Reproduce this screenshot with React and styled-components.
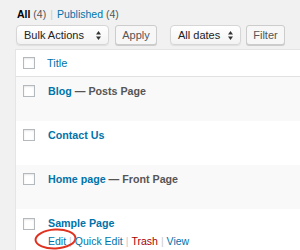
import React from "react"
import styled, { createGlobalStyle } from "styled-components"

const GlobalStyle = createGlobalStyle`
    html, body {
        margin: 0;
        padding: 0;
        background-color: #f1f1f1;
        font-family: "Liberation Sans", Arial, sans-serif;
        overflow: hidden;
    }
`

const Wrap = styled.div`
    width: 300px;
    height: 250px;
    padding: 7px 0 0 15px;
    box-sizing: border-box;
    overflow: hidden;
`

const Views = styled.div`
    display: flex;
    align-items: center;
    height: 14px;
    margin-left: 2px;
    font-size: 10.5px;
    color: #555;
`

const Current = styled.span`
    font-weight: 700;
    color: #000;
`

const ViewLink = styled.span`
    color: #0073aa;
`

const Sep = styled.span`
    color: ${p => p.$light ? "#ccc" : "#999"};
    margin: 0 ${p => p.$gap || 3}px;
`

const TableNav = styled.div`
    display: flex;
    align-items: center;
    margin-top: 4px;
    height: 20px;
`

const Select = styled.div`
    width: ${p => p.$w}px;
    height: 20px;
    box-sizing: border-box;
    margin-left: ${p => p.$ml || 0}px;
    padding: 0 7px;
    display: flex;
    align-items: center;
    justify-content: space-between;
    border-radius: 4px;
    border: 1px solid #d6d6d6;
    background: linear-gradient(#ffffff, #f3f3f3);
    box-shadow: 0 1px 1px rgba(0, 0, 0, 0.08);
    font-size: 11px;
    color: #222;
`

const Button = styled.div`
    width: ${p => p.$w}px;
    height: 20px;
    box-sizing: border-box;
    margin-left: ${p => p.$ml || 0}px;
    display: flex;
    align-items: center;
    justify-content: center;
    border-radius: 3px;
    border: 1px solid #cccccc;
    background-color: #f7f7f7;
    box-shadow: 0 1px 0 #cccccc;
    font-size: 11px;
    color: #555;
`

const Table = styled.div`
    margin-top: 4px;
    width: 300px;
    background-color: #fff;
    border: 1px solid #e5e5e5;
    border-right: none;
`

const HeadRow = styled.div`
    height: 26px;
    display: flex;
    align-items: center;
    border-bottom: 1px solid #e1e1e1;
    font-size: 11px;
    color: #0073aa;
`

const Row = styled.div`
    height: ${p => p.$h || 44}px;
    display: flex;
    align-items: flex-start;
    background-color: ${p => p.$alt ? "#f9f9f9" : "#fff"};
`

const CheckCell = styled.div`
    width: ${p => p.$w || 32}px;
    padding: ${p => p.$top || 0}px 0 0 7px;
    box-sizing: border-box;
    flex-shrink: 0;
`

const Box = styled.div`
    width: 12px;
    height: 12px;
    box-sizing: border-box;
    border: 1px solid #b4b9be;
    background-color: #fff;
    box-shadow: inset 0 1px 2px rgba(0, 0, 0, 0.1);
`

const TitleCell = styled.div`
    padding-top: 8px;
    display: flex;
    flex-direction: column;
    gap: 6px;
`

const Title = styled.div`
    font-size: 10.7px;
    font-weight: 700;
    color: #0073aa;
    white-space: nowrap;
`

const State = styled.span`
    color: #555;
`

const Actions = styled.div`
    display: flex;
    align-items: center;
    font-size: 10.5px;
    color: #0073aa;
    white-space: nowrap;
`

const Action = styled.span`
    position: relative;
    color: ${p => p.$danger ? "#a00" : "#0073aa"};
`

const Circle = styled.svg`
    position: absolute;
    left: -14px;
    top: -8px;
    pointer-events: none;
`

function Arrows() {
    return (
        <svg width="5" height="9" viewBox="0 0 5 9">
            <path d="M2.5 0 L5 3.5 L0 3.5 Z" fill="#333" />
            <path d="M2.5 9 L5 5.5 L0 5.5 Z" fill="#333" />
        </svg>
    )
}

const pages = [
    { name: "Blog", state: "Posts Page" },
    { name: "Contact Us" },
    { name: "Home page", state: "Front Page" },
]

export default function App() {
    return (
        <Wrap>
            <GlobalStyle />
            <Views>
                <span><Current>All</Current> (4)</span>
                <Sep $light $gap={4}>|</Sep>
                <span><ViewLink>Published</ViewLink> (4)</span>
            </Views>
            <TableNav>
                <Select $w={93} $ml={1}>
                    <span>Bulk Actions</span>
                    <Arrows />
                </Select>
                <Button $w={42} $ml={6}>Apply</Button>
                <Select $w={71} $ml={13}>
                    <span>All dates</span>
                    <Arrows />
                </Select>
                <Button $w={39} $ml={5}>Filter</Button>
            </TableNav>
            <Table>
                <HeadRow>
                    <CheckCell $w={31}><Box /></CheckCell>
                    <span>Title</span>
                </HeadRow>
                {pages.map((p, i) => (
                    <Row key={p.name} $alt={i % 2 === 0}>
                        <CheckCell $top={8}><Box /></CheckCell>
                        <TitleCell>
                            <Title>
                                {p.name}
                                {p.state && <State> — {p.state}</State>}
                            </Title>
                        </TitleCell>
                    </Row>
                ))}
                <Row>
                    <CheckCell $top={9}><Box /></CheckCell>
                    <TitleCell>
                        <Title>Sample Page</Title>
                        <Actions>
                            <Action>
                                Edit
                                <Circle width="44" height="24" viewBox="0 0 44 24">
                                    <ellipse cx="21.5" cy="12" rx="20" ry="9.5"
                                        fill="none" stroke="#e0301e" strokeWidth="2"
                                        transform="rotate(-3 21.5 12)" />
                                </Circle>
                            </Action>
                            <Sep $light $gap={3}>|</Sep>
                            <Action>Quick Edit</Action>
                            <Sep $light $gap={3}>|</Sep>
                            <Action $danger>Trash</Action>
                            <Sep $light $gap={3}>|</Sep>
                            <Action>View</Action>
                        </Actions>
                    </TitleCell>
                </Row>
            </Table>
        </Wrap>
    )
}
